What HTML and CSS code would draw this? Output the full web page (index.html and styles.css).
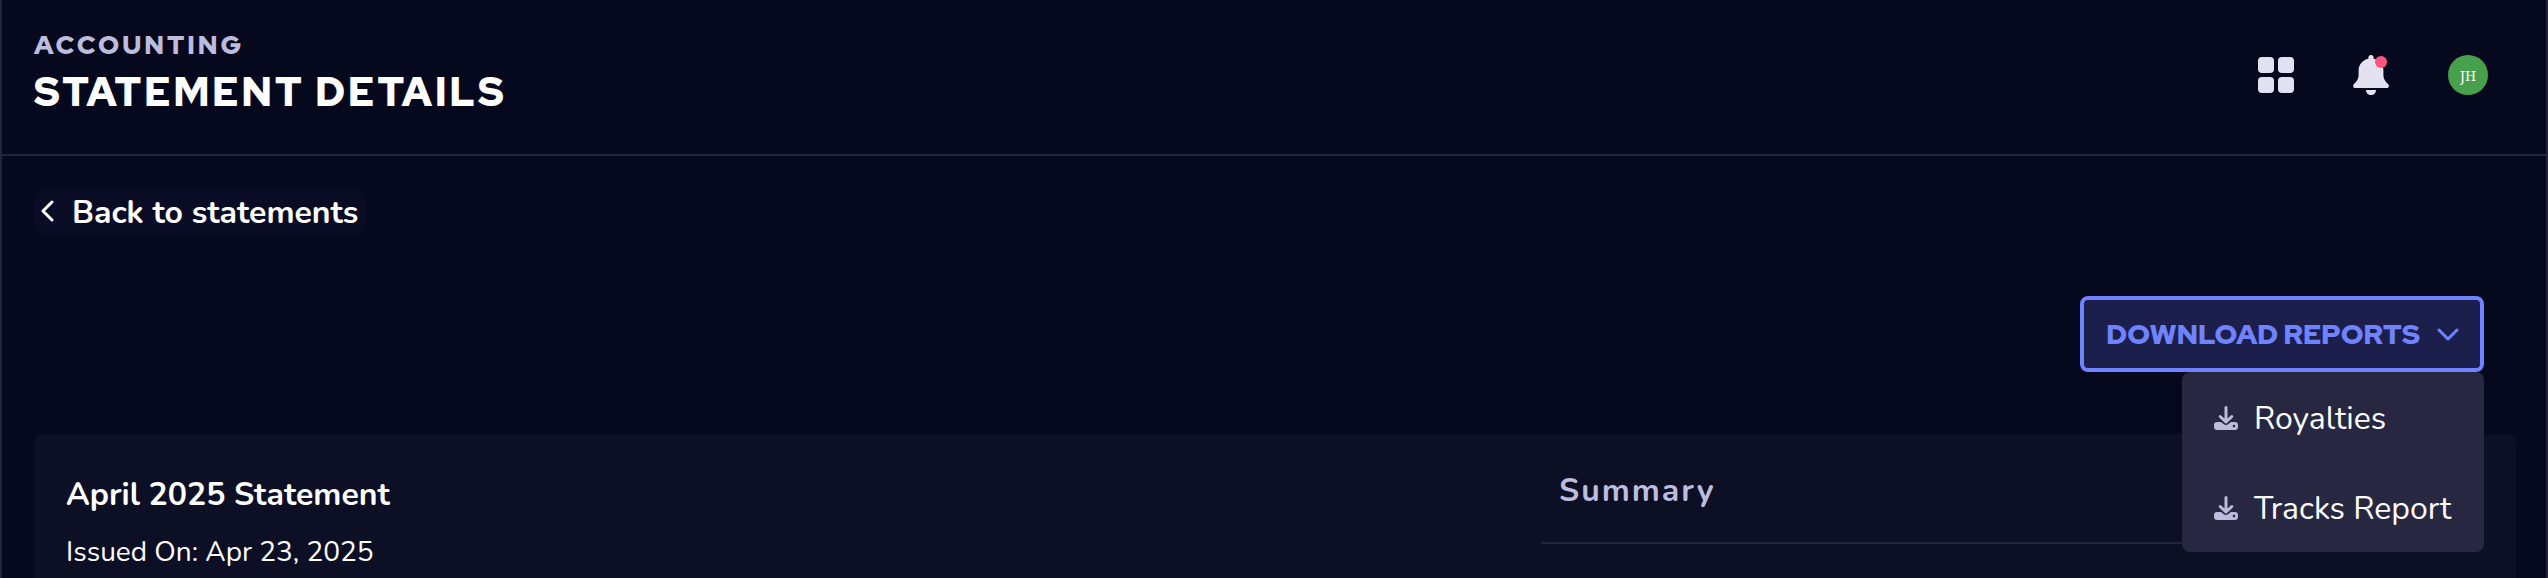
FILE: index.html
```html
<!DOCTYPE html>
<html lang="en">
<head>
    <meta charset="UTF-8">
    <meta name="viewport" content="width=device-width, initial-scale=1.0">
    <title>Statement Details</title>
    <link rel="stylesheet" href="styles.css">
</head>
<body>
    <header class="header">
        <div class="titles">
            <p class="section">ACCOUNTING</p>
            <h1>STATEMENT DETAILS</h1>
        </div>
        <div class="actions">
            <button type="button" class="icon-btn" aria-label="Apps">
                <svg width="36" height="36" viewBox="0 0 36 36" fill="#e2e2f2">
                    <rect width="16" height="16" rx="4"/>
                    <rect x="20" width="16" height="16" rx="4"/>
                    <rect y="20" width="16" height="16" rx="4"/>
                    <rect x="20" y="20" width="16" height="16" rx="4"/>
                </svg>
            </button>
            <button type="button" class="icon-btn" aria-label="Notifications">
                <svg width="36" height="40" viewBox="0 0 36 40">
                    <path fill="#e4e2f0" d="M18 0c-1.600 0-2.600 1.200-2.600 2.600v1.200C9.500 5 5.600 9.800 5.600 15.500v4.500c0 3.500-1.500 6.200-4.600 9C.2 29.800 0 30.600.2 31.400c.3 1 1 1.600 2 1.600h31.600c1 0 1.700-.6 2-1.600.2-.8 0-1.600-.8-2.400-3.100-2.800-4.600-5.500-4.600-9v-4.500c0-5.700-3.900-10.500-9.800-11.700V2.600C20.600 1.200 19.600 0 18 0z"/>
                    <path fill="#e2e2f4" d="M13 35h10c0 3-2.200 5-5 5s-5-2-5-5z"/>
                    <circle cx="28" cy="7" r="6" fill="#ff5580"/>
                </svg>
            </button>
            <button type="button" class="avatar">JH</button>
        </div>
    </header>

    <main class="content">
        <a href="#" class="back">
            <svg width="16" height="24" viewBox="0 0 16 24" fill="none" stroke="#fff" stroke-width="3" stroke-linecap="round" stroke-linejoin="round">
                <path d="M12 2L3 11l9 9"/>
            </svg>
            Back to statements
        </a>

        <div class="toolbar">
            <div class="dropdown">
                <button type="button" class="download" aria-expanded="true">
                    DOWNLOAD REPORTS
                    <svg width="24" height="16" viewBox="0 0 24 16" fill="none" stroke="#6f82ff" stroke-width="3" stroke-linecap="round" stroke-linejoin="round">
                        <path d="M3 4l9 9 9-9"/>
                    </svg>
                </button>
                <div class="menu">
                    <a href="#">
                        <svg width="24" height="24" viewBox="0 0 24 24">
                            <path fill="#bcbcdc" fill-rule="evenodd" d="M3.200 16H7l2.600 2.100a3.800 3.800 0 0 0 4.800 0L17 16h3.800a3.200 3.200 0 0 1 3.200 3.200v1.600a3.200 3.200 0 0 1-3.200 3.200H3.200A3.200 3.200 0 0 1 0 20.800v-1.600A3.200 3.200 0 0 1 3.200 16zM20 18.800a1.300 1.300 0 1 0 0 2.600 1.300 1.300 0 0 0 0-2.600z"/>
                            <path fill="none" stroke="#bcbcdc" stroke-width="3" stroke-linecap="round" stroke-linejoin="round" d="M12 1.500V16M6.200 10.500L12 16l5.800-5.500"/>
                        </svg>
                        Royalties
                    </a>
                    <a href="#">
                        <svg width="24" height="24" viewBox="0 0 24 24">
                            <path fill="#bcbcdc" fill-rule="evenodd" d="M3.200 16H7l2.600 2.100a3.800 3.800 0 0 0 4.800 0L17 16h3.800a3.200 3.200 0 0 1 3.200 3.200v1.600a3.200 3.200 0 0 1-3.200 3.200H3.200A3.200 3.200 0 0 1 0 20.800v-1.600A3.200 3.200 0 0 1 3.200 16zM20 18.800a1.300 1.300 0 1 0 0 2.600 1.300 1.300 0 0 0 0-2.600z"/>
                            <path fill="none" stroke="#bcbcdc" stroke-width="3" stroke-linecap="round" stroke-linejoin="round" d="M12 1.500V16M6.200 10.500L12 16l5.800-5.500"/>
                        </svg>
                        Tracks Report
                    </a>
                </div>
            </div>
        </div>

        <section class="card">
            <div class="statement">
                <h2>April 2025 Statement</h2>
                <p>Issued On: Apr 23, 2025</p>
            </div>
            <div class="summary">
                <h3>Summary</h3>
            </div>
        </section>
    </main>
</body>
</html>
```
FILE: styles.css
```css
* {
    box-sizing: border-box;
}
body {
    margin: 0;
    min-height: 100vh;
    display: flex;
    flex-direction: column;
    background: #06081d;
    color: #fff;
    font-family: Nunito, Lato, sans-serif;
    border-left: 2px solid #24253c;
    border-right: 2px solid #24253c;
}
h1, h2, h3, p {
    margin: 0;
}
svg {
    display: block;
    flex: none;
}
button {
    border: none;
    padding: 0;
    cursor: pointer;
}
a {
    color: #fff;
    text-decoration: none;
}
.header {
    display: flex;
    justify-content: space-between;
    align-items: flex-start;
    height: 156px;
    padding: 28px 58px 0 32px;
    border-bottom: 2px solid #24253c;
}
.section {
    font: 900 26px/34px "Red Hat Display", Inter, sans-serif;
    letter-spacing: 3px;
    color: #bcbcdc;
}
h1 {
    font: 900 40px/60px "Red Hat Display", Inter, sans-serif;
    letter-spacing: 3px;
}
.actions {
    display: flex;
    align-items: center;
    gap: 59px;
    padding-top: 27px;
}
.icon-btn {
    background: none;
}
.avatar {
    width: 40px;
    height: 40px;
    border-radius: 50%;
    background: #47a04b;
    color: #fff;
    font: 14px "Roboto Slab", "Noto Serif", "DejaVu Serif", serif;
}
.content {
    flex: 1;
    display: flex;
    flex-direction: column;
    padding: 34px 30px 0 32px;
}
.back {
    align-self: flex-start;
    display: flex;
    align-items: center;
    gap: 16px;
    height: 44px;
    padding: 0 8px 0 6px;
    border-radius: 8px;
    background: #0a0b24;
    font-size: 32px;
    font-weight: 700;
}
.toolbar {
    display: flex;
    justify-content: flex-end;
    padding: 62px 32px 62px 0;
}
.dropdown {
    position: relative;
}
.download {
    display: flex;
    align-items: center;
    gap: 16px;
    height: 76px;
    padding: 0 20px 0 22px;
    border: 4px solid #6f82ff;
    border-radius: 8px;
    background: #1c1f4c;
    color: #6f82ff;
    font: 900 28px "Red Hat Display", Inter, sans-serif;
}
.menu {
    position: absolute;
    top: 100%;
    right: 0;
    z-index: 1;
    width: 302px;
    border-radius: 8px;
    background: #272742;
}
.menu a {
    display: flex;
    align-items: center;
    gap: 16px;
    height: 90px;
    padding: 2px 0 0 32px;
    font-size: 32px;
    white-space: nowrap;
}
.card {
    flex: 1;
    display: flex;
    justify-content: space-between;
    padding: 34px 32px 0;
    border-radius: 8px 8px 0 0;
    background: #0d0f25;
}
.statement h2 {
    font-size: 32px;
    font-weight: 700;
    line-height: 54px;
}
.statement p {
    padding-top: 6px;
    font-size: 28px;
    line-height: 48px;
}
.summary {
    width: 39%;
}
.summary h3 {
    padding: 0 0 28px 18px;
    border-bottom: 2px solid #24253c;
    color: #bcbcdc;
    font-size: 32px;
    font-weight: 700;
    line-height: 46px;
    letter-spacing: 2px;
}
```
